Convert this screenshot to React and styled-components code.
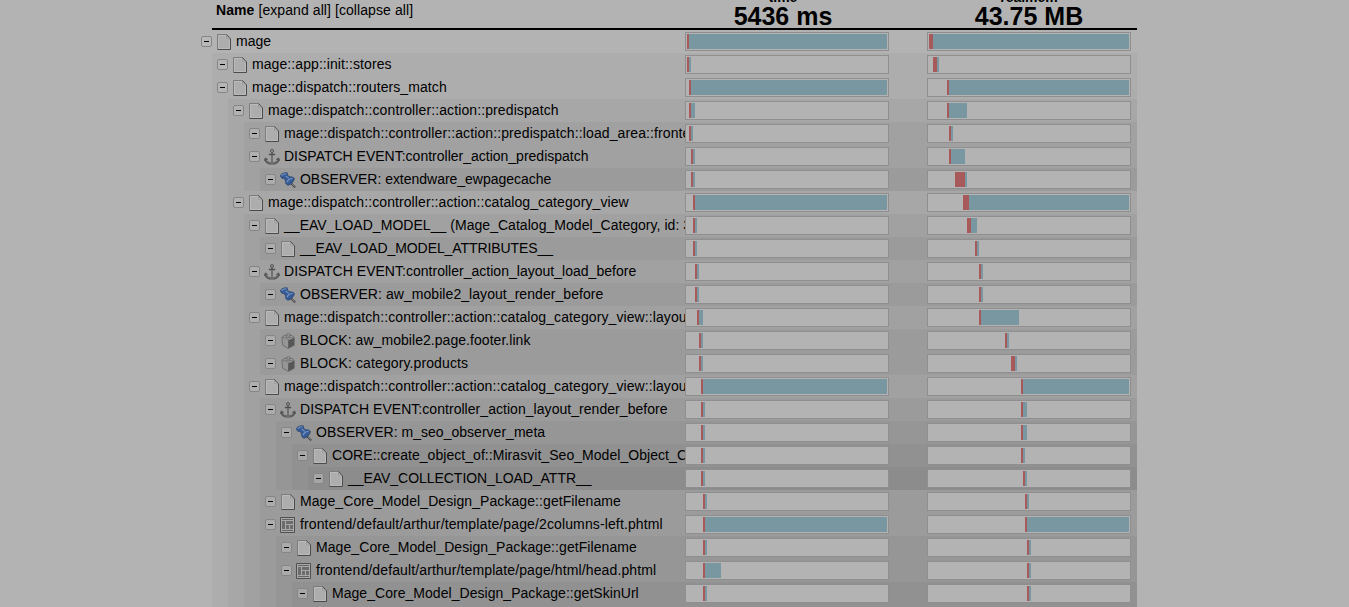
import React from 'react'
import styled, { createGlobalStyle } from 'styled-components'

const GlobalStyle = createGlobalStyle`
  html,
  body {
    margin: 0;
    height: 607px;
    overflow: hidden;
    background: #b3b3b3;
  }
`

const Profiler = styled.div`
  width: 925px;
  height: 607px;
  margin: 0 auto;
  color: #000;
  font-family: Arial, 'Liberation Sans', sans-serif;
  font-size: 14px;
`

const Header = styled.header`
  display: grid;
  grid-template-columns: 1fr 204px 38px 204px 6px;
  height: 28px;
  border-bottom: 2px solid #000;
`

const NameHeading = styled.div`
  padding: 2px 0 0 4px;
  letter-spacing: 0.08px;
  line-height: 17px;
  white-space: pre;
`

const MetricHeading = styled.div`
  grid-column: ${props => props.$column};
  display: flex;
  flex-direction: column;
  align-items: center;
  margin: -11px ${props => props.$shift || 0}px 0 0;
  font-size: 14px;
  font-weight: bold;
  line-height: 16px;
`

const Total = styled.span`
  font-size: 25px;
  line-height: 23px;
  white-space: nowrap;
`

const Branch = styled.ul`
  list-style: none;
  margin: 0 0 0 ${props => (props.$root ? '-16px' : '16px')};
  padding: 0 0 ${props => (props.$open ? '23px' : 0)};
  background: ${props => (props.$root ? 'none' : 'rgba(0, 0, 0, 0.03)')};
`

const Row = styled.div`
  display: flex;
  align-items: flex-start;
  height: 23px;
`

const Label = styled.div`
  flex: 1;
  min-width: 0;
  display: flex;
  align-items: center;
  height: 23px;
  padding-left: 5px;
  overflow: hidden;
`

const Toggle = styled.span`
  flex: none;
  box-sizing: border-box;
  display: flex;
  align-items: center;
  justify-content: center;
  width: 11px;
  height: 11px;
  margin-right: 4px;
  border: 1px solid #868686;
  border-radius: 2px;
  background: rgba(190, 190, 190, 0.5);

  &::before {
    content: '';
    width: 5px;
    height: 1px;
    background: #000;
  }
`

const Icon = styled.svg`
  flex: none;
  width: 16px;
  height: 16px;
  margin: 1px 4px 0 0;
`

const Text = styled.span`
  letter-spacing: ${props => props.$spacing}px;
  line-height: 17px;
  white-space: nowrap;
`

const Track = styled.div`
  flex: none;
  box-sizing: border-box;
  display: flex;
  width: 204px;
  height: 19px;
  margin: 2px ${props => props.$gap}px 0 0;
  padding: 1px;
  border: 1px solid #8f8f8f;
  background: #b3b3b3;
`

const Own = styled.div`
  height: 15px;
  background: #a85a5a;
`

const Inclusive = styled.div`
  height: 15px;
  background: #7997a1;
`

const PageIcon = () => (
  <Icon viewBox="0 0 16 16">
    <path d="M1.5.5h9l4 4.5v10.5h-13z" fill="#adadad" />
    <path d="M2.5 14.5v-13H10v4h3.5v9z" fill="none" stroke="#bababa" />
    <path d="M1.5 15V.5h9" fill="none" stroke="#7c7c7c" />
    <path d="M10.5.5l4 4.5v10.5h-13" fill="none" stroke="#4b4b4b" />
    <path d="M10.5 1.5v3.5h3.5z" fill="#b5b5b5" stroke="#8a8a8a" strokeWidth=".6" />
  </Icon>
)

const AnchorIcon = () => (
  <Icon viewBox="0 0 16 16" fill="none" stroke="#505050">
    <circle cx="8" cy="2" r="1.5" strokeWidth="1" />
    <path d="M8 3.5v11M4.8 5.5h6.4" strokeWidth="1.4" />
    <path d="M1.5 10c.4 3 3 4.6 6.5 4.6s6.1-1.6 6.5-4.6" strokeWidth="2" />
    <path d="M.4 11.8l1-2.9 2.4 1.9M15.6 11.8l-1-2.9-2.4 1.9" />
    <path d="M2 11c1 2.5 3 3.4 6 3.4s5-.9 6-3.4M8 6v8" stroke="#8c8c8c" strokeWidth=".6" />
  </Icon>
)

const PinIcon = () => (
  <Icon viewBox="0 0 16 16">
    <path d="M10.5 10.8l4.7 4.6" stroke="#484848" strokeWidth="1.9" />
    <path d="M11 11l3.6 3.6" stroke="#9a9a9a" strokeWidth=".7" />
    <path
      d="M.5 3.2C1.8 1.5 4.2.4 7.2.8l.5 2.6L10 5c1.7-.5 3.6.2 4.4 1.7-.9 3.2-3.2 5.7-6.4 6.6-2-.8-2.9-2.4-2.3-4.2L4 6.3l-2 .1C1 5.5.5 4.4.5 3.2z"
      fill="#365b96"
      stroke="#263f69"
      strokeWidth=".7"
    />
    <path d="M1.5 3.5C3 2.2 4.8 1.6 6.4 1.8M5.8 4l3 2.4M7 10.3c.8-2.3 2.8-3.8 5.5-4" fill="none" stroke="#7193c0" strokeWidth="1.2" />
  </Icon>
)

const BlockIcon = () => (
  <Icon viewBox="0 0 16 16">
    <path d="M2 4.2l6.2 3v8.3L2.5 12z" fill="#969696" />
    <path d="M8.2 7.2l6-2.7v7.8l-6 3.2z" fill="#565656" />
    <path d="M2 4.2l6-3.1 6.2 3.4-6 2.7z" fill="#a3a3a3" />
    <path d="M2 4.2L8 1.1l6.2 3.4v7.8l-6 3.2L2.5 12z" fill="none" stroke="#656565" strokeWidth=".8" />
    <g fill="#a6a6a6" stroke="#626262" strokeWidth=".8">
      <ellipse cx="8.5" cy="1.8" rx="1.7" ry="1.2" />
      <ellipse cx="4.7" cy="3.8" rx="1.7" ry="1.2" />
      <ellipse cx="11.3" cy="3.6" rx="1.6" ry="1.1" />
      <ellipse cx="8" cy="5.3" rx="1.6" ry="1.1" />
    </g>
  </Icon>
)

const TemplateIcon = () => (
  <Icon viewBox="0 0 16 16">
    <path d="M.5.5h14v15H.5z" fill="#a9a9a9" stroke="#505050" />
    <path d="M2 2.5h11M2 13.5h11" stroke="#666" />
    <path d="M2 4h3v8H2zM6 4h7v3H6zM6 8h3v4H6zM10 8h3v4h-3z" fill="#6c6c6c" />
  </Icon>
)

const icons = {
  page: PageIcon,
  anchor: AnchorIcon,
  pin: PinIcon,
  block: BlockIcon,
  template: TemplateIcon,
}

// time and mem: [start, own, inclusive] in percent of the total
const node = (icon, text, spacing, time, mem, children = [], open = false) => ({
  icon,
  text,
  spacing,
  time,
  mem,
  children,
  open,
})

const tree = [
  node('page', 'mage', 0, [0, 1, 99], [0, 2, 98], [
    node('page', 'mage::app::init::stores', 0.08, [0, 1, 1], [2, 2, 1]),
    node('page', 'mage::dispatch::routers_match', 0.09, [1, 1, 98], [9, 1, 90], [
      node('page', 'mage::dispatch::controller::action::predispatch', 0.11, [1, 1, 2], [9, 1, 9], [
        node('page', 'mage::dispatch::controller::action::predispatch::load_area::frontend', 0.11, [1, 1, 1], [10, 1, 1]),
        node('anchor', 'DISPATCH EVENT:controller_action_predispatch', 0, [2, 1, 1], [10, 1, 7], [
          node('pin', 'OBSERVER: extendware_ewpagecache', -0.02, [2, 1, 1], [13, 5, 1]),
        ]),
      ]),
      node('page', 'mage::dispatch::controller::action::catalog_category_view', 0.09, [3, 1, 96], [17, 3, 80], [
        node('page', '__EAV_LOAD_MODEL__ (Mage_Catalog_Model_Category, id: 3)', 0.04, [3, 1, 1], [19, 2, 3], [
          node('page', '__EAV_LOAD_MODEL_ATTRIBUTES__', -0.09, [3, 1, 1], [23, 1, 1]),
        ]),
        node('anchor', 'DISPATCH EVENT:controller_action_layout_load_before', 0.02, [4, 1, 1], [25, 1, 1], [
          node('pin', 'OBSERVER: aw_mobile2_layout_render_before', 0.06, [4, 1, 1], [25, 1, 1]),
        ]),
        node('page', 'mage::dispatch::controller::action::catalog_category_view::layout_load', 0.09, [5, 1, 2], [25, 1, 19], [
          node('block', 'BLOCK: aw_mobile2.page.footer.link', 0.05, [6, 1, 1], [38, 1, 1]),
          node('block', 'BLOCK: category.products', 0.11, [6, 1, 1], [41, 2, 1]),
        ]),
        node('page', 'mage::dispatch::controller::action::catalog_category_view::layout_render', 0.09, [7, 1, 92], [46, 1, 53], [
          node('anchor', 'DISPATCH EVENT:controller_action_layout_render_before', 0.045, [7, 1, 1], [46, 1, 2], [
            node('pin', 'OBSERVER: m_seo_observer_meta', 0.02, [7, 1, 1], [46, 1, 2], [
              node('page', 'CORE::create_object_of::Mirasvit_Seo_Model_Object_Category', 0.05, [7, 1, 1], [46, 1, 1], [
                node('page', '__EAV_COLLECTION_LOAD_ATTR__', -0.04, [7, 1, 1], [47, 1, 1]),
              ]),
            ]),
          ]),
          node('page', 'Mage_Core_Model_Design_Package::getFilename', 0.08, [8, 1, 1], [48, 1, 1]),
          node('template', 'frontend/default/arthur/template/page/2columns-left.phtml', 0.125, [8, 1, 91], [48, 1, 51], [
            node('page', 'Mage_Core_Model_Design_Package::getFilename', 0.08, [8, 1, 1], [49, 1, 1]),
            node('template', 'frontend/default/arthur/template/page/html/head.phtml', 0.12, [8, 1, 8], [49, 1, 1], [
              node('page', 'Mage_Core_Model_Design_Package::getSkinUrl', 0.04, [8, 1, 1], [49, 1, 1]),
            ], true),
          ]),
        ]),
      ]),
    ]),
  ]),
]

const Meter = ({ values: [start, own, inclusive], gap }) => (
  <Track $gap={gap}>
    <Own style={{ marginLeft: `${start}%`, width: `${own}%` }} />
    <Inclusive style={{ width: `${inclusive}%` }} />
  </Track>
)

const TreeBranch = ({ nodes, root, open }) => (
  <Branch $root={root} $open={open}>
    {nodes.map(item => {
      const NodeIcon = icons[item.icon]
      return (
        <li key={item.text}>
          <Row>
            <Label>
              <Toggle />
              <NodeIcon />
              <Text $spacing={item.spacing}>{item.text}</Text>
            </Label>
            <Meter values={item.time} gap={38} />
            <Meter values={item.mem} gap={6} />
          </Row>
          {item.children.length > 0 && <TreeBranch nodes={item.children} open={item.open} />}
        </li>
      )
    })}
  </Branch>
)

const App = () => (
  <>
    <GlobalStyle />
    <Profiler>
      <Header>
        <NameHeading>
          <b>Name</b> [expand all] [collapse all]
        </NameHeading>
        <MetricHeading $column={2} $shift={8}>
          time
          <Total>5436 ms</Total>
        </MetricHeading>
        <MetricHeading $column={4}>
          realmem
          <Total>43.75 MB</Total>
        </MetricHeading>
      </Header>
      <TreeBranch nodes={tree} root />
    </Profiler>
  </>
)

export default App
